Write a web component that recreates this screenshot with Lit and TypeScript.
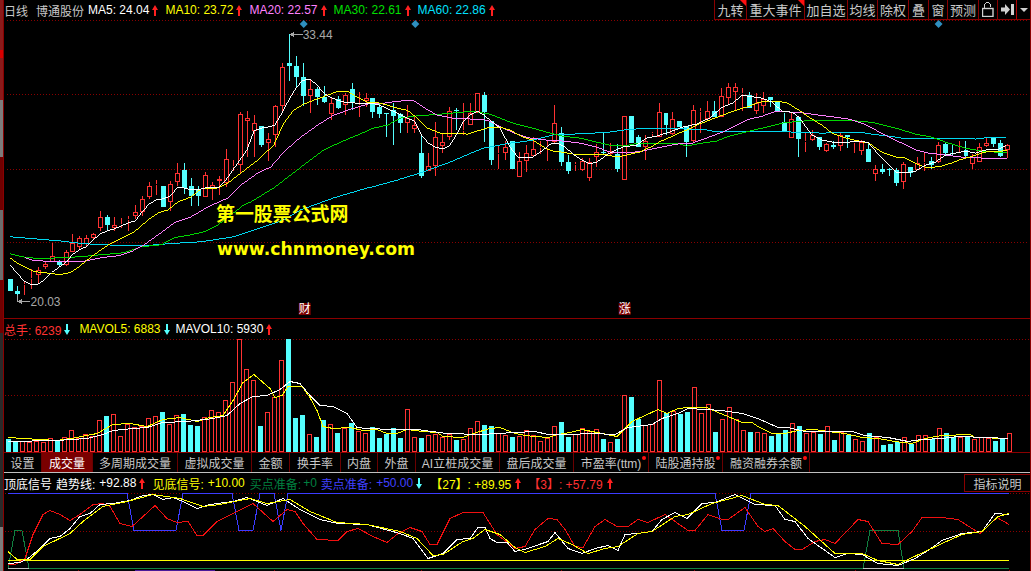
import { LitElement, css, html, svg } from 'lit';
import { customElement } from 'lit/decorators.js';

// top, bottom, high, low, 1 = falling (cyan)
const candles = [
  [280,292,280,292,1],[292,295,287,303,1],[285,286,283,296,0],[279,280,270,290,0],[271,276,268,285,0],[265,268,262,270,0],
  [257,263,244,263,0],[263,266,261,268,1],[253,266,251,267,0],[244,253,235,253,0],[239,248,237,251,0],[239,245,236,248,0],
  [235,239,234,241,0],[218,229,212,232,0],[218,226,216,232,1],[226,229,218,232,0],[225,226,219,229,0],[220,221,217,232,0],
  [213,217,206,220,0],[200,213,197,217,0],[187,198,183,200,0],[185,186,181,196,0],[187,208,187,208,1],[185,203,182,212,0],
  [174,183,163,187,0],[171,189,163,195,1],[187,197,179,207,1],[191,197,187,207,1],[176,198,173,198,0],[186,190,183,201,0],
  [180,182,177,196,0],[159,184,149,188,0],[166,167,160,172,0],[114,165,112,175,0],[118,121,111,157,0],[123,131,115,157,0],
  [126,145,126,147,1],[139,143,133,161,0],[106,135,105,147,0],[67,106,63,113,0],[63,66,34,81,1],[66,77,56,87,1],
  [77,96,63,106,1],[89,96,80,113,0],[89,97,87,105,1],[97,102,86,103,1],[103,114,98,120,0],[99,108,96,109,1],
  [95,105,93,115,0],[89,102,83,110,1],[105,106,92,117,0],[98,101,93,107,0],[98,112,98,118,1],[107,114,104,118,1],
  [113,114,113,137,1],[110,116,103,145,1],[114,123,113,133,1],[118,123,105,133,0],[125,129,117,133,0],[153,177,136,179,1],
  [166,172,153,172,0],[137,166,122,177,0],[142,146,134,153,0],[111,137,107,140,0],[110,111,108,130,1],[130,131,103,135,0],
  [113,125,103,125,0],[93,113,93,113,0],[95,112,92,142,1],[121,160,121,165,1],[153,154,145,170,0],[147,153,141,160,0],
  [141,169,141,169,1],[161,178,152,178,0],[153,161,145,173,0],[149,156,137,157,0],[147,148,141,154,0],[147,148,141,161,0],
  [123,142,105,143,0],[133,162,127,166,1],[162,172,155,175,1],[164,165,162,172,0],[161,171,158,172,0],[162,179,158,182,0],
  [152,157,144,167,0],[152,153,133,154,1],[151,154,143,155,0],[154,170,144,173,1],[116,181,116,181,0],[116,143,116,143,1],
  [137,147,135,147,1],[141,147,135,160,0],[133,134,132,137,0],[112,137,103,137,0],[113,125,113,135,1],[119,134,112,135,0],
  [121,127,121,127,1],[126,142,126,157,1],[110,141,105,142,0],[111,112,108,133,0],[111,119,101,120,0],[111,117,101,117,1],
  [96,117,88,117,0],[87,98,83,105,0],[87,92,83,111,0],[93,94,88,111,0],[95,108,92,108,1],[103,111,93,114,0],
  [99,106,92,113,0],[97,100,97,107,1],[102,111,102,111,1],[122,132,113,132,1],[119,138,113,138,0],[117,139,117,157,1],
  [141,142,132,152,0],[135,140,130,141,0],[137,147,137,150,1],[144,151,143,152,0],[145,147,141,149,1],[135,146,132,151,0],
  [135,137,135,148,1],[142,143,140,153,0],[142,151,140,155,0],[149,162,143,162,1],[170,175,165,182,0],[169,173,164,175,1],
  [170,171,168,177,1],[171,184,168,187,1],[164,183,162,190,0],[167,174,167,178,1],[163,170,157,171,0],[162,163,153,172,0],
  [161,165,157,169,1],[145,162,142,163,0],[144,153,143,155,1],[153,154,145,156,1],[146,147,141,153,0],[150,156,141,157,1],
  [157,164,154,170,0],[147,162,143,162,0],[143,146,138,147,0],[137,144,137,147,1],[143,156,140,157,1],[145,150,144,158,0],
];

const volumes = [
  439,441,441,442,441,442,438,440,437,430,438,434,436,420,416,414,436,424,427,426,418,416,412,424,415,414,425,426,417,410,
  412,400,382,339,369,380,426,412,397,360,339,418,415,434,437,420,424,433,428,423,431,433,427,438,434,428,438,409,437,438,
  435,434,437,434,440,439,428,421,425,426,433,435,437,436,430,435,441,438,426,422,437,434,428,431,429,439,442,439,395,397,
  419,425,424,380,413,411,414,412,387,413,404,432,419,407,419,430,432,432,433,436,433,430,423,426,433,432,434,426,440,432,
  435,439,441,433,437,445,444,442,437,444,435,435,439,428,433,437,437,437,439,437,438,441,439,433,
];

const ma60 = [8,237,33,239,57,241,83,244,123,246,143,246,167,244,200,242,233,237,260,228,283,220,300,210,333,198,367,188,400,179,420,173,450,162,483,148,490,147,510,143,520,142,533,140,557,134,573,134,593,133,610,132,623,130,647,128,670,128,690,129,703,129,713,131,780,131,793,132,823,133,860,132,873,134,890,136,903,138,937,138,970,138,977,139,983,138,1008,137];
const ma30 = [8,254,20,257,37,259,60,258,80,257,100,255,123,253,140,247,160,245,173,238,190,235,203,232,217,225,230,215,243,205,250,202,273,188,290,175,307,162,323,150,340,142,357,135,373,128,387,125,400,118,413,116,440,114,473,111,490,114,500,118,510,122,520,125,533,128,550,133,563,136,580,138,597,142,610,145,623,146,640,143,677,143,687,146,703,143,717,141,730,136,750,131,763,128,783,123,800,121,830,120,863,121,877,123,897,128,917,134,933,137,950,143,967,148,983,151,1009,153];
const ma20 = [23,258,33,261,60,262,80,262,100,258,117,256,130,252,143,245,157,235,173,223,190,217,207,207,227,198,240,185,257,173,270,167,283,152,300,137,317,125,333,115,350,109,370,103,383,103,397,101,413,100,423,107,437,115,453,118,473,119,487,120,503,128,517,134,530,138,547,140,563,141,580,143,597,147,610,152,627,153,643,151,657,148,677,144,693,143,707,138,723,132,737,125,750,119,763,116,777,111,793,112,807,113,820,115,837,117,850,119,863,123,877,130,890,137,903,143,917,150,930,153,947,155,963,157,983,158,997,158,1007,159,1009,158];
const ma10 = [8,258,15,263,33,272,43,273,58,275,68,273,80,265,90,257,107,245,123,237,133,232,147,220,157,213,167,210,177,202,190,197,200,189,217,188,227,183,240,173,257,160,273,145,283,123,293,110,303,104,313,100,327,95,337,91,347,91,357,97,367,102,380,103,397,108,407,110,417,118,427,128,440,133,457,133,467,134,480,130,490,127,500,127,510,130,523,137,533,140,547,149,553,151,562,152,573,154,603,154,617,157,627,155,640,152,653,146,663,140,677,134,687,130,697,125,710,120,723,115,737,110,750,106,760,102,770,101,787,102,800,110,810,117,823,125,833,133,847,138,860,141,870,143,883,152,897,157,907,158,920,165,930,168,943,166,953,163,963,159,977,155,987,152,1003,151,1009,150];
const ma5 = [8,265,15,273,22,281,29,285,36,285,43,280,50,273,57,268,64,263,71,255,78,250,85,247,92,240,99,234,106,231,113,229,120,226,127,223,134,221,141,212,148,204,155,200,162,199,169,196,176,188,183,188,190,190,197,190,204,188,211,188,218,187,225,180,232,170,239,160,246,150,253,131,260,128,267,127,274,125,281,113,288,100,295,88,302,80,309,79,316,84,323,93,330,97,337,100,344,102,358,103,372,103,379,105,386,108,397,113,407,118,414,121,421,135,428,143,435,147,442,149,449,146,456,135,463,122,470,115,477,111,484,115,490,120,500,128,510,147,518,157,533,157,543,150,552,143,557,143,565,147,577,157,590,164,597,162,610,153,623,147,637,145,647,138,657,136,670,132,683,127,697,124,710,118,723,107,733,103,743,95,763,98,773,102,783,111,793,112,800,117,807,127,813,135,823,140,833,142,850,142,863,141,870,143,880,155,890,165,897,172,907,173,917,171,927,165,937,162,947,155,957,153,967,151,977,153,987,150,1000,149,1008,145];

const mavol5 = [8,437,23,438,57,440,77,437,97,433,113,424,130,423,147,426,163,419,180,417,197,421,210,417,223,415,233,400,243,382,254,374,263,382,270,388,275,397,282,395,288,386,302,386,310,397,317,410,323,426,333,428,350,427,363,430,377,429,387,433,397,433,407,429,423,431,437,432,443,436,463,437,473,433,490,428,500,427,515,433,525,435,535,436,548,437,558,434,570,432,582,429,592,431,602,433,617,436,625,428,632,421,645,415,658,409,667,413,678,408,688,407,707,407,718,412,728,416,742,422,752,422,758,426,772,433,785,433,798,430,815,429,828,431,845,433,862,437,878,438,895,441,912,443,925,438,942,435,970,434,975,437,1008,438];
const mavol10 = [8,441,57,440,87,438,103,434,113,430,133,428,147,427,163,422,187,421,213,418,227,415,240,403,253,396,267,395,280,389,290,381,300,383,310,395,320,405,333,406,347,413,357,427,367,428,393,429,417,429,447,433,480,434,515,432,535,431,548,434,568,434,592,433,615,434,628,427,652,424,662,418,678,413,688,408,705,409,722,410,742,413,758,418,778,427,788,427,805,431,852,431,865,435,888,437,908,441,922,439,942,438,958,436,988,437,1008,438];

const sigBlue = [8,492,127,492,134,529,176,529,183,492,232,492,239,529,253,529,260,492,274,492,281,529,288,492,715,492,722,529,744,529,751,492,1009,492];
const sigGreen = [8,567,15,529,22,529,29,567,863,567,870,529,898,529,904,567,1009,567];
const sigRed = [8,563,15,563,25,557,33,533,43,513,50,509,60,513,70,519,80,513,93,503,103,502,110,505,120,522,132,525,143,515,155,504,167,517,177,521,188,520,197,534,203,534,217,520,233,512,253,502,273,520,287,508,295,510,303,522,317,538,338,539,347,530,358,527,373,535,387,541,398,532,410,526,422,530,430,543,437,543,450,517,463,511,483,511,497,533,515,547,525,545,535,528,548,517,557,518,565,528,575,545,583,546,595,525,605,518,617,525,628,525,638,518,648,521,665,513,688,529,695,529,708,513,722,518,728,518,745,506,758,525,765,530,773,527,785,540,795,548,802,548,815,540,825,538,835,542,858,518,868,520,882,542,898,543,912,530,922,516,942,516,958,518,980,532,997,516,1009,523];
const sigWhite = [8,562,20,561,28,557,40,547,50,537,60,535,70,527,80,515,90,512,100,503,113,502,130,499,143,494,153,493,163,498,173,496,183,500,197,507,210,503,233,500,247,496,267,504,283,497,300,508,320,518,338,522,367,523,400,532,413,537,428,557,443,552,457,538,470,537,478,526,485,526,490,537,497,541,507,541,515,550,525,548,542,542,548,540,555,531,568,547,582,552,595,547,608,544,618,549,625,533,638,532,652,530,662,518,675,511,687,517,702,502,715,501,735,493,755,503,775,504,785,518,795,520,808,537,835,556,848,552,862,553,878,562,898,564,915,557,928,549,942,539,962,532,982,530,995,512,1009,513];
const sigYellow = [8,550,17,558,30,558,43,545,70,532,83,520,103,505,127,500,153,493,180,497,203,505,220,503,250,497,267,502,290,498,310,510,337,521,367,523,400,530,417,537,433,554,443,553,463,540,473,537,485,528,500,533,515,546,525,551,545,545,558,537,572,543,588,552,605,547,618,545,638,532,652,530,675,515,688,513,712,502,742,494,765,503,778,504,805,525,835,552,862,552,878,559,898,563,908,558,942,542,962,533,982,530,998,515,1009,512];

const RED = '#ff3232';
const CYAN = '#54ffff';

const railParts = [
  [50, '#8b1a1a'], [8, '#d80000'], [42, '#8b1a1a'], [57, '#7c7c7c'], [53, '#700000'], [70, '#6c6c6c'],
  [53, '#700000'], [194, '#2a2a2a'], [44, '#7c7c7c'],
];

const tabs = [
  ['设置'], ['成交量', 'on'], ['多周期成交量'], ['虚拟成交量'], ['金额'], ['换手率'], ['内盘'], ['外盘'], ['AI立桩成交量'],
  ['盘后成交量'], ['市盈率(ttm)', 'dot'], ['陆股通持股', 'dot'], ['融资融券余额', 'dot'],
];

const pts = (a: number[]) => {
  let out = '';
  for (let i = 0; i < a.length; i += 2) out += `${a[i]},${a[i + 1] + 0.5} `;
  return out;
};

const line = (a: number[], color: string) =>
  svg`<polyline points=${pts(a)} fill="none" stroke=${color} stroke-width="1" shape-rendering="crispEdges"></polyline>`;

const dots = (y: number) =>
  svg`<line x1="5" x2="1030" y1=${y + 0.5} y2=${y + 0.5} stroke="#8a0000" stroke-dasharray="1 2" shape-rendering="crispEdges"></line>`;

const arrow = (dir: 'up' | 'down') => html`<svg class="arrow ${dir}" width="6" height="11" viewBox="0 0 6 11">
  <path d=${dir === 'up' ? 'M3 0L6 5H4V11H2V5H0Z' : 'M2 0H4V6H6L3 11L0 6H2Z'}></path>
</svg>`;

const diamond = (x: number) =>
  svg`<polygon points="${x},20 ${x + 4},24 ${x},28 ${x - 4},24" fill="#2f8fbf"></polygon>`;

const tag = (x: number, t: string) => svg`<rect x=${x} y="304" width="12" height="12" fill="#7a0000"></rect>
  <text class="tag" x=${x + 6} y="314" text-anchor="middle">${t}</text>`;

@customElement('app-root')
export class AppRoot extends LitElement {
  static styles = css`
    :host {
      display: flex;
      width: 1031px;
      height: 571px;
      overflow: hidden;
      background: #000;
      font: 12px 'Liberation Sans', 'Noto Sans CJK SC', sans-serif;
      color: #c8c8c8;
    }
    svg { display: block; flex: none; }
    .rail { width: 3px; flex: none; display: flex; flex-direction: column; }
    .main {
      width: 1026px;
      flex: none;
      border-left: 1px solid #8a0000;
      border-right: 1px solid #8a0000;
      display: flex;
      flex-direction: column;
    }
    .legend { display: flex; align-items: center; height: 20px; flex: none; white-space: nowrap; }
    .price-legend .name { margin-left: 8px; margin-right: 4px; }
    .item { display: flex; align-items: center; gap: 3px; margin-right: 7px; }
    .arrow.up path { fill: #ff2020; }
    .arrow.down path { fill: #54ffff; }
    .white { color: #fff; }
    .yellow { color: #ffff00; }
    .pink { color: #ff80ff; }
    .green { color: #00e000; }
    .sky { color: #00e0ff; }
    .red { color: #ff3232; }
    .dim { color: #008040; }
    .blue { color: #4040ff; }
    .buttons {
      margin-left: auto;
      height: 20px;
      display: grid;
      grid-template-columns: 32px 58px 43px 30px 31px 20px 19px 31px 19px 19px 14px;
      font-size: 13px;
    }
    .btn {
      position: relative;
      display: flex;
      align-items: center;
      justify-content: center;
      border-left: 1px solid #8a0000;
      border-bottom: 1px solid #8a0000;
      box-sizing: border-box;
    }
    .btn.flag::after {
      content: '';
      position: absolute;
      top: 0;
      right: 0;
      border-top: 6px solid #ff1010;
      border-left: 6px solid transparent;
    }
    .btn.caret { border-left-color: #b00000; }
    .price { height: 298px; flex: none; border-bottom: 1px solid #8a0000; }
    .vol-legend .item { margin-right: 9px; }
    .vol-legend .item:nth-child(2) { margin-right: 6px; }
    .tabs {
      flex: none;
      height: 19px;
      display: grid;
      grid-template-columns: 38px 51px 85px 74px 38px 51px 37px 38px 84px 74px 75px 74px 87px;
      justify-content: start;
      border-top: 1px solid #8a0000;
      border-bottom: 1px solid #c0c0c0;
      white-space: nowrap;
    }
    .tab {
      position: relative;
      display: flex;
      align-items: center;
      justify-content: center;
      border-right: 1px solid #6a0000;
    }
    .tab.on { background: #7a0000; color: #fff; }
    .tab.dot::after {
      content: '';
      position: absolute;
      top: 3px;
      right: 2px;
      width: 4px;
      height: 4px;
      border-radius: 50%;
      background: #ff1010;
    }
    .sig-legend { gap: 4px; }
    .sig-legend .item { margin-right: 0; }
    .sig-legend .m1 { margin-left: 1px; }
    .sig-legend .m3 { margin-left: 3px; }
    .sig-legend .m4 { margin-left: 4px; }
    .sig-legend .back { margin-left: -2px; }
    .help {
      margin-left: auto;
      width: 66px;
      height: 18px;
      box-sizing: border-box;
      border: 1px solid #8a0000;
      border-right: none;
      display: flex;
      align-items: center;
      justify-content: center;
    }
    .wm-cn { font: bold 19px 'Noto Sans CJK SC', sans-serif; fill: #ffff00; }
    .wm-en { font: bold 17.3px 'DejaVu Sans', sans-serif; fill: #ffff00; }
    .peak { font: 12px 'Liberation Sans', sans-serif; fill: #a8a8a8; }
    .tag { font: 12px 'Noto Sans CJK SC', sans-serif; fill: #fff; }
  `;

  private renderPrice() {
    return html`<svg class="price" width="1026" height="299" viewBox="4 20 1026 299">
      ${[20, 94, 169, 243].map(dots)}
      ${candles.map(([top, bot, hi, lo, down], i) => {
        const x = 6 + 7 * i;
        const color = down ? CYAN : RED;
        return svg`<g shape-rendering="crispEdges">
          <line x1=${x + 2.5} x2=${x + 2.5} y1=${hi} y2=${top} stroke=${color}></line>
          <line x1=${x + 2.5} x2=${x + 2.5} y1=${bot} y2=${lo} stroke=${color}></line>
          ${down
            ? svg`<rect x=${x} y=${top} width="5" height=${bot - top} fill=${color}></rect>`
            : svg`<rect x=${x + 0.5} y=${top + 0.5} width="4" height=${Math.max(bot - top - 1, 0)} fill="#000" stroke=${color}></rect>`}
        </g>`;
      })}
      ${line(ma60, '#00d8f0')}${line(ma30, '#00d800')}${line(ma20, '#ff80ff')}${line(ma10, '#ffff00')}${line(ma5, '#ffffff')}
      ${[303, 415, 940].map(diamond)}
      <path d="M289 34.5H302M289 34.5L293 32.5V36.5Z" stroke="#a8a8a8" fill="#a8a8a8" shape-rendering="crispEdges"></path>
      <text class="peak" x="302" y="39">33.44</text>
      <path d="M15.5 296V302.5H28M16 302.5L20 300.5V304.5Z" stroke="#a8a8a8" fill="none" shape-rendering="crispEdges"></path>
      <text class="peak" x="29" y="307">20.03</text>
      <text class="wm-cn" x="215" y="222">第一股票公式网</text>
      <text class="wm-en" x="216" y="256">www.chnmoney.com</text>
      ${tag(298, '财')}${tag(619, '涨')}
    </svg>`;
  }

  private renderVolume() {
    return html`<svg width="1026" height="113" viewBox="4 339 1026 113">
      ${[339, 395].map(dots)}
      <g shape-rendering="crispEdges">
        ${volumes.map((top, i) => {
          const x = 6 + 7 * i;
          return candles[i][4]
            ? svg`<rect x=${x} y=${top} width="5" height=${452 - top} fill=${CYAN}></rect>`
            : svg`<rect x=${x + 0.5} y=${top + 0.5} width="4" height=${451 - top} fill="#000" stroke=${RED}></rect>`;
        })}
      </g>
      ${line(mavol5, '#ffff00')}${line(mavol10, '#ffffff')}
    </svg>`;
  }

  private renderSignal() {
    return html`<svg width="1026" height="79" viewBox="4 492 1026 79">
      ${[492, 530].map(dots)}
      ${line(sigBlue, '#3c3cff')}${line(sigGreen, '#108040')}
      ${line([8, 567, 29, 567], '#c0c0c0')}${line([863, 567, 904, 567], '#c0c0c0')}
      ${line([8, 559, 1009, 559], '#ffff00')}
      ${line(sigRed, '#f01010')}${line(sigWhite, '#ffffff')}${line(sigYellow, '#ffff00')}
      <rect x="135" y="569" width="80" height="2" fill="#4a1a9a"></rect>
      ${[78, 274, 421, 561, 694, 855, 1009].map(
        x => svg`<rect x=${x} y="569" width="1" height="2" fill="#8a0000"></rect>`,
      )}
    </svg>`;
  }

  render() {
    return html`
      <div class="rail">
        ${railParts.map(([h, c]) => html`<div style="height:${h}px;background:${c}"></div>`)}
      </div>
      <div class="main">
        <div class="legend price-legend">
          <span>日线</span><span class="name">博通股份</span>
          <span class="item white"><span>MA5: 24.04</span>${arrow('up')}</span>
          <span class="item yellow"><span>MA10: 23.72</span>${arrow('up')}</span>
          <span class="item pink"><span>MA20: 22.57</span>${arrow('up')}</span>
          <span class="item green"><span>MA30: 22.61</span>${arrow('up')}</span>
          <span class="item sky"><span>MA60: 22.86</span>${arrow('up')}</span>
          <div class="buttons">
            <div class="btn flag">九转</div>
            <div class="btn flag">重大事件</div>
            <div class="btn">加自选</div>
            <div class="btn">均线</div>
            <div class="btn">除权</div>
            <div class="btn">叠</div>
            <div class="btn">窗</div>
            <div class="btn">预测</div>
            <div class="btn">
              <svg width="12" height="15" viewBox="0 0 12 15" fill="none" stroke="#d0d0d0">
                <path d="M2.5 6.5V3.5Q2.5 .5 5.5 .5T8.5 3.5V4.5" shape-rendering="crispEdges"></path>
                <rect x=".5" y="6.5" width="10.5" height="8" stroke-width="1.4"></rect>
              </svg>
            </div>
            <div class="btn">
              <svg width="13" height="11" viewBox="0 0 13 11" fill="#d0d0d0">
                <path d="M0 3.5H4V0L9 5.5L4 11V7.5H0Z"></path>
                <rect x="10" y="0" width="3" height="11"></rect>
              </svg>
            </div>
            <div class="btn caret">
              <svg width="8" height="4" viewBox="0 0 8 4" fill="#d0d0d0"><path d="M0 0H8L4 4Z"></path></svg>
            </div>
          </div>
        </div>
        ${this.renderPrice()}
        <div class="legend vol-legend">
          <span class="item red"><span>总手: 6239</span>${arrow('down')}</span>
          <span class="item yellow"><span>MAVOL5: 6883</span>${arrow('down')}</span>
          <span class="item white"><span>MAVOL10: 5930</span>${arrow('up')}</span>
        </div>
        ${this.renderVolume()}
        <div class="tabs">
          ${tabs.map(([t, k]) => html`<div class="tab ${k ?? ''}">${t}</div>`)}
        </div>
        <div class="legend sig-legend">
          <span class="white">顶底信号</span>
          <span class="white">趋势线:</span>
          <span class="item white"><span>+92.88</span>${arrow('up')}</span>
          <span class="yellow m3">见底信号:</span><span class="yellow">+10.00</span>
          <span class="dim m1">买点准备:</span><span class="dim back">+0</span>
          <span class="blue">卖点准备:</span>
          <span class="item blue"><span>+50.00</span>${arrow('down')}</span>
          <span class="yellow m4">【27】: +89.95</span>${arrow('up')}
          <span class="red m3">【3】: +57.79</span>${arrow('up')}
          <div class="help">指标说明</div>
        </div>
        ${this.renderSignal()}
      </div>
    `;
  }
}
